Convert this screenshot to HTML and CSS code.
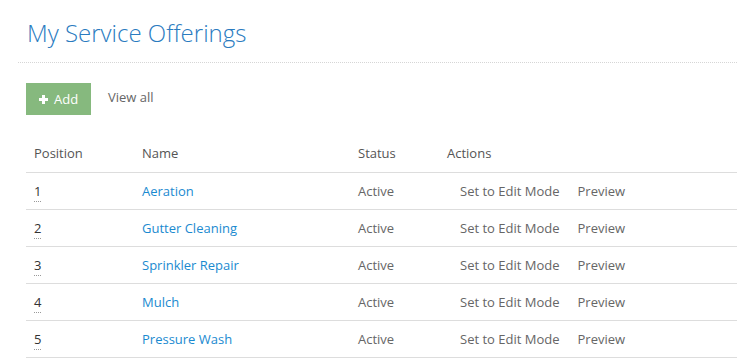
FILE: index.html
```html
<!DOCTYPE html>
<html lang="en">
<head>
    <meta charset="utf-8" />
    <title>My Service Offerings</title>
    <link rel="stylesheet" href="styles.css">
</head>
<body>
    <div class="page">
        <h1 class="title">My Service Offerings</h1>
        <div class="toolbar">
            <a class="btn_add" href="#">
                <svg class="plus" width="9" height="9" viewBox="0 0 9 9"><path d="M3 0h3v3h3v3h-3v3h-3v-3h-3v-3h3z" fill="#fff"/></svg>
                Add
            </a>
            <a class="view_all" href="#">View all</a>
        </div>
        <table class="offerings">
            <thead>
                <tr>
                    <th class="c_pos">Position</th>
                    <th class="c_name">Name</th>
                    <th class="c_status">Status</th>
                    <th>Actions</th>
                </tr>
            </thead>
            <tbody>
                <tr>
                    <td><span class="pos">1</span></td>
                    <td><a href="#">Aeration</a></td>
                    <td>Active</td>
                    <td class="actions"><span>Set to Edit Mode</span><span>Preview</span></td>
                </tr>
                <tr>
                    <td><span class="pos">2</span></td>
                    <td><a href="#">Gutter Cleaning</a></td>
                    <td>Active</td>
                    <td class="actions"><span>Set to Edit Mode</span><span>Preview</span></td>
                </tr>
                <tr>
                    <td><span class="pos">3</span></td>
                    <td><a href="#">Sprinkler Repair</a></td>
                    <td>Active</td>
                    <td class="actions"><span>Set to Edit Mode</span><span>Preview</span></td>
                </tr>
                <tr>
                    <td><span class="pos">4</span></td>
                    <td><a href="#">Mulch</a></td>
                    <td>Active</td>
                    <td class="actions"><span>Set to Edit Mode</span><span>Preview</span></td>
                </tr>
                <tr>
                    <td><span class="pos">5</span></td>
                    <td><a href="#">Pressure Wash</a></td>
                    <td>Active</td>
                    <td class="actions"><span>Set to Edit Mode</span><span>Preview</span></td>
                </tr>
            </tbody>
        </table>
    </div>
</body>
</html>
```

FILE: styles.css
```css
* {
    margin: 0px;
    padding: 0px;
    box-sizing: border-box;
}

body {
    font-family: 'Open Sans', sans-serif;
    font-size: 13px;
    color: #666;
    background: #fff;
    overflow: hidden;
}

.page {
    padding-left: 18px;
}

.title {
    font-size: 24px;
    font-weight: 300;
    color: #2a7bbf;
    padding: 16px 0px 0px 9px;
    line-height: 34px;
    height: 63px;
    border-bottom: 1px dotted #d6d6d6;
}

.toolbar {
    display: flex;
    align-items: center;
    margin-top: 20px;
    padding-left: 8px;
}

.btn_add {
    display: flex;
    align-items: center;
    width: 65px;
    height: 32px;
    padding-left: 13px;
    background: #86b97e;
    color: #fff;
    text-decoration: none;
}

    .btn_add .plus {
        margin-right: 6px;
        margin-top: 1px;
    }

.view_all {
    margin-left: 17px;
    margin-top: -4px;
    color: #666;
    text-decoration: none;
}

.offerings {
    margin-left: 8px;
    margin-top: 20px;
    width: 720px;
    border-collapse: collapse;
}

    .offerings th {
        text-align: left;
        font-weight: 400;
        color: #555;
        height: 37px;
        padding: 0px 8px;
        border-bottom: 1px solid #ddd;
    }

    .offerings td {
        height: 37px;
        padding: 0px 8px;
        border-bottom: 1px solid #ddd;
    }

    .offerings a {
        color: #1a8ad0;
        text-decoration: none;
    }

.c_pos {
    width: 108px;
}

.c_name {
    width: 216px;
}

.c_status {
    width: 89px;
}

.pos {
    color: #333;
    border-bottom: 1px dotted #999;
    padding-bottom: 1px;
}

.actions span {
    margin-left: 13px;
    margin-right: 4px;
}

    .actions span + span {
        margin-left: 14px;
    }
```
